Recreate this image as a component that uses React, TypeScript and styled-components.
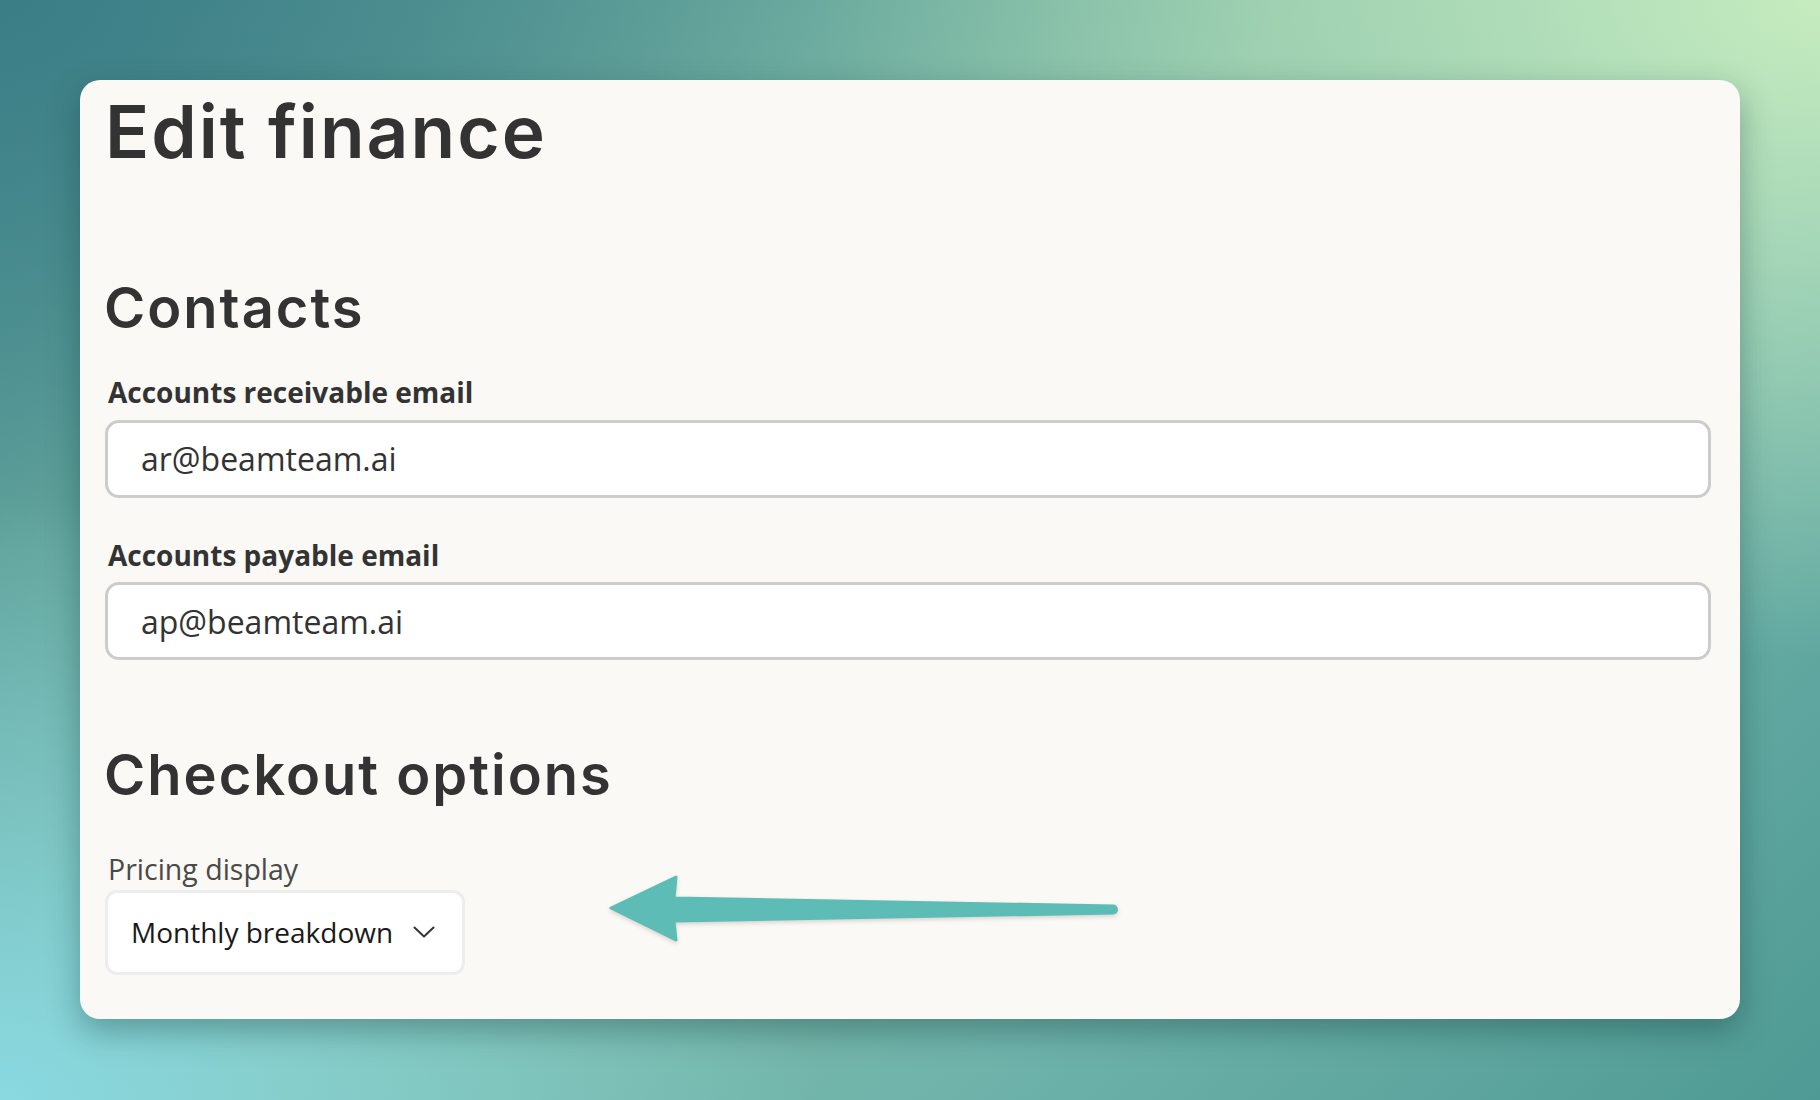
import React from 'react';
import styled, { createGlobalStyle } from 'styled-components';

const GlobalStyle = createGlobalStyle`
	html, body {
		margin: 0;
		padding: 0;
	}
	* {
		box-sizing: border-box;
	}
`;

const Page = styled.div`
	min-height: 1100px;
	padding: 80px 80px 0 80px;
	background:
		radial-gradient(ellipse 55% 60% at 100% 0%, #c6ecbf 0%, rgba(198, 236, 191, 0) 100%),
		radial-gradient(ellipse 45% 55% at 0% 100%, #8ad9e1 0%, rgba(138, 217, 225, 0) 100%),
		radial-gradient(ellipse 45% 50% at 0% 0%, #3c7e86 0%, rgba(60, 126, 134, 0) 100%),
		linear-gradient(135deg, #4a8f92 0%, #7fbba6 45%, #6fb3ab 70%, #4f9a94 100%);
`;

const Card = styled.main`
	background: #faf9f5;
	border-radius: 20px;
	box-shadow: 0 12px 32px rgba(10, 50, 50, 0.35);
	padding: 15px 29px 44px 25px;
	color: #333333;
`;

const Title = styled.h1`
	margin: 0;
	font-family: Inter, 'Liberation Sans', sans-serif;
	font-weight: 600;
	font-size: 73px;
	line-height: 1;
	letter-spacing: 2px;
`;

const SectionTitle = styled.h2<{ $gap: number }>`
	margin: ${(p) => p.$gap}px 0 0 -1px;
	font-family: Inter, 'Liberation Sans', sans-serif;
	font-weight: 600;
	font-size: 56px;
	line-height: 1;
	letter-spacing: 2px;
`;

const Field = styled.div<{ $gap: number }>`
	display: flex;
	flex-direction: column;
	margin-top: ${(p) => p.$gap}px;
`;

const Label = styled.label<{ $bold?: boolean }>`
	font-family: 'Open Sans', 'Liberation Sans', sans-serif;
	font-size: ${(p) => (p.$bold ? 28 : 28.5)}px;
	font-weight: ${(p) => (p.$bold ? 700 : 400)};
	line-height: ${(p) => (p.$bold ? 1.2 : 1.14)};
	color: ${(p) => (p.$bold ? '#333333' : '#4a4a4a')};
	padding-left: 3px;
	margin-bottom: ${(p) => (p.$bold ? 10 : 4)}px;
`;

const TextInput = styled.input`
	width: 100%;
	height: 78px;
	border: 3px solid #cccccc;
	border-radius: 14px;
	background: #ffffff;
	padding: 0 33px;
	font-family: 'Open Sans', 'Liberation Sans', sans-serif;
	font-size: 32px;
	color: #333333;
	outline: none;
`;

const PricingRow = styled.div`
	display: flex;
	align-items: flex-start;
`;

const SelectButton = styled.button`
	display: flex;
	align-items: center;
	gap: 20px;
	height: 85px;
	padding: 0 27px 0 23px;
	border: 3px solid #ededed;
	border-radius: 12px;
	background: #ffffff;
	font-family: 'Open Sans', 'Liberation Sans', sans-serif;
	font-size: 28px;
	color: #1a1a1a;
	cursor: pointer;
`;

const Chevron = styled.svg`
	width: 22px;
	height: 12px;
	flex-shrink: 0;
`;

const Arrow = styled.svg`
	margin-left: 140px;
	margin-top: 71px;
	width: 520px;
	height: 70px;
	overflow: visible;
	filter: drop-shadow(0 2px 2px rgba(0, 0, 0, 0.15));
`;

export default function App() {
	return (
		<>
			<GlobalStyle />
			<Page>
				<Card>
					<Title>Edit finance</Title>

					<SectionTitle $gap={112}>Contacts</SectionTitle>
					<Field $gap={40}>
						<Label $bold>Accounts receivable email</Label>
						<TextInput readOnly value="ar@beamteam.ai" />
					</Field>
					<Field $gap={41}>
						<Label $bold>Accounts payable email</Label>
						<TextInput readOnly value="ap@beamteam.ai" />
					</Field>

					<SectionTitle $gap={87}>Checkout options</SectionTitle>
					<PricingRow>
						<Field $gap={50}>
							<Label>Pricing display</Label>
							<SelectButton>
								Monthly breakdown
								<Chevron viewBox="0 0 22 12">
									<path
										d="M1.5 1.5 L11 10.5 L20.5 1.5"
										fill="none"
										stroke="#333"
										strokeWidth="2"
										strokeLinecap="round"
										strokeLinejoin="round"
									/>
								</Chevron>
							</SelectButton>
						</Field>
						{/* annotation arrow pointing at the select */}
						<Arrow viewBox="0 0 520 70">
							<path
								d="M6 34 L71 3 L69 24 L508 32 A3.5 3.5 0 0 1 508 39 L69 47 L71 66 Z"
								fill="#5dbcb5"
								stroke="#5dbcb5"
								strokeWidth="3"
								strokeLinejoin="round"
							/>
						</Arrow>
					</PricingRow>
				</Card>
			</Page>
		</>
	);
}
